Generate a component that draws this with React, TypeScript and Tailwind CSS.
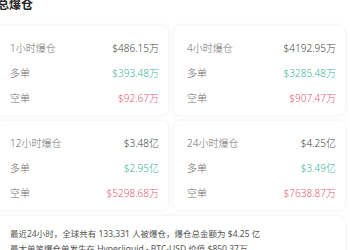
const cards = [
  { label: "1小时爆仓", total: "$486.15万", long: "$393.48万", short: "$92.67万" },
  { label: "4小时爆仓", total: "$4192.95万", long: "$3285.48万", short: "$907.47万" },
  { label: "12小时爆仓", total: "$3.48亿", long: "$2.95亿", short: "$5298.68万" },
  { label: "24小时爆仓", total: "$4.25亿", long: "$3.49亿", short: "$7638.87万" },
]

function Row({ label, value, color }: { label: string; value: string; color: string }) {
  return (
    <div className="flex h-[25px] items-center justify-between">
      <span className="text-[#707070]">{label}</span>
      <span className={color}>{value}</span>
    </div>
  )
}

export default function App() {
  return (
    <div
      className="h-[250px] w-[350px] overflow-hidden bg-white"
      style={{ fontFamily: '"Noto Sans", "Noto Sans CJK SC", sans-serif' }}
    >
      <div className="-mt-[5px] ml-[-3px] w-[348px]">
        <h2 className="h-[20px] text-[12px] font-bold leading-[20px] text-[#222]">总爆仓</h2>
        <div className="mt-[11px] grid grid-cols-2 gap-[6px] text-[10px] font-light">
          {cards.map((c) => (
            <div
              key={c.label}
              className="rounded-[6px] bg-white pb-[4px] pl-[13px] pr-[9px] pt-[10px] shadow-[0_0_4px_rgba(0,0,0,0.08)]"
            >
              <Row label={c.label} value={c.total} color="text-[#444]" />
              <Row label="多单" value={c.long} color="text-[#3ab59b]" />
              <Row label="空单" value={c.short} color="text-[#e35b72]" />
            </div>
          ))}
        </div>
        <div className="mt-[6px] rounded-[6px] bg-white px-[13px] pb-[10px] pt-[10px] text-[8.5px] leading-[15px] text-[#555] shadow-[0_0_4px_rgba(0,0,0,0.08)]">
          <p>最近24小时，全球共有 133,331 人被爆仓，爆仓总金额为 $4.25 亿</p>
          <p>最大单笔爆仓单发生在 Hyperliquid - BTC-USD 价值 $850.37万</p>
        </div>
      </div>
    </div>
  )
}
